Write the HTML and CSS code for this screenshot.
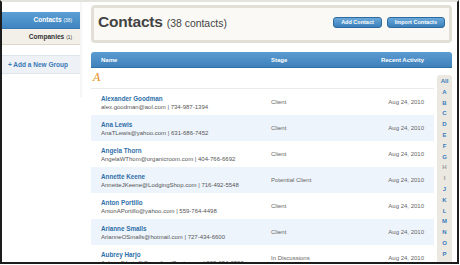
FILE: index.html
```html
<!DOCTYPE html>
<html>
<head>
<meta charset="utf-8">
<link rel="stylesheet" href="styles.css">
</head>
<body>
<div class="frame">
  <aside class="sidebar">
    <div class="nav-item active">Contacts <small>(38)</small></div>
    <div class="nav-item">Companies <small>(1)</small></div>
    <div class="add-group">+ Add a New Group</div>
  </aside>
  <main class="main">
    <div class="head-box">
      <h1 class="title">Contacts <span class="count">(38 contacts)</span></h1>
      <div class="actions">
        <button class="btn">Add Contact</button>
        <button class="btn">Import Contacts</button>
      </div>
    </div>
    <div class="thead">
      <span>Name</span><span>Stage</span><span class="right">Recent Activity</span>
    </div>
    <div class="body">
      <div class="list">
        <div class="letter">A</div>
        <div class="row">
          <div><div class="name">Alexander Goodman</div><div class="meta">alex.goodman@aol.com | 734-987-1394</div></div>
          <div class="stage">Client</div><div class="date">Aug 24, 2010</div>
        </div>
        <div class="row alt">
          <div><div class="name">Ana Lewis</div><div class="meta">AnaTLewis@yahoo.com | 631-686-7452</div></div>
          <div class="stage">Client</div><div class="date">Aug 24, 2010</div>
        </div>
        <div class="row">
          <div><div class="name">Angela Thorn</div><div class="meta">AngelaWThom@organicroom.com | 404-766-6692</div></div>
          <div class="stage">Client</div><div class="date">Aug 24, 2010</div>
        </div>
        <div class="row alt">
          <div><div class="name">Annette Keene</div><div class="meta">AnnetteJKeene@LodgingShop.com | 716-492-5548</div></div>
          <div class="stage">Potential Client</div><div class="date">Aug 24, 2010</div>
        </div>
        <div class="row">
          <div><div class="name">Anton Portillo</div><div class="meta">AntonAPortillo@yahoo.com | 559-764-4498</div></div>
          <div class="stage">Client</div><div class="date">Aug 24, 2010</div>
        </div>
        <div class="row alt">
          <div><div class="name">Arianne Smalls</div><div class="meta">AriannеOSmalls@hotmail.com | 727-434-6600</div></div>
          <div class="stage">Client</div><div class="date">Aug 24, 2010</div>
        </div>
        <div class="row">
          <div><div class="name">Aubrey Harjo</div><div class="meta">AubreyJHarjo@ConsultantQuote.com | 208-654-0300</div></div>
          <div class="stage">In Discussions</div><div class="date">Aug 24, 2010</div>
        </div>
      </div>
      <nav class="alpha">
        <a>All</a><a>A</a><a>B</a><a>C</a><a>D</a><a>E</a><a>F</a><a>G</a><a class="off">H</a><a class="off">I</a><a>J</a><a>K</a><a>L</a><a>M</a><a>N</a><a>O</a><a>P</a>
      </nav>
    </div>
  </main>
</div>
</body>
</html>
```
FILE: styles.css
```css
html, body {
  margin: 0;
  padding: 0;
  background: #ffffff;
  width: 460px;
  height: 265px;
  overflow: hidden;
  font-family: "Liberation Sans", Arial, sans-serif;
}
.frame {
  width: 455px;
  height: 260px;
  border-top: 2px solid #e4e2dc;
  border-left: 2px solid #1c1c1c;
  border-right: 2px solid #1c1c1c;
  border-bottom: 2px solid #1c1c1c;
  display: flex;
  overflow: hidden;
  background: #fff;
}
.sidebar {
  width: 78px;
  flex: none;
  padding-top: 10px;
  position: relative;
}
.sidebar::after {
  content: "";
  position: absolute;
  right: -3px;
  top: 0;
  width: 3px;
  height: 95px;
  background: linear-gradient(to right, rgba(0,0,0,0.05), rgba(0,0,0,0));
}
.nav-item {
  height: 15px;
  line-height: 15px;
  text-align: right;
  padding-right: 8px;
  font-size: 6.6px;
  font-weight: bold;
  color: #333;
  background: #f3f0e9;
  border-bottom: 1px solid #dcd8ce;
}
.nav-item small {
  font-size: 4.8px;
  font-weight: normal;
}
.nav-item.active {
  height: 16px;
  line-height: 16px;
  background: linear-gradient(#5d9fd4, #3f85c0);
  color: #fff;
  border-bottom: 1px solid #3a78ad;
}
.add-group {
  margin-top: 10px;
  height: 17px;
  line-height: 17px;
  padding-left: 6px;
  background: #eef2f7;
  border-top: 1px solid #dfe5ec;
  border-bottom: 1px solid #dfe5ec;
  color: #3a78b5;
  font-size: 6.5px;
  font-weight: bold;
}
.main {
  flex: 1;
  min-width: 0;
  padding: 3px 5px 0 11px;
}
.head-box {
  height: 38px;
  box-sizing: border-box;
  border: 3px solid #e2dfd6;
  border-radius: 4px;
  background: #faf9f5;
  display: flex;
  align-items: center;
  justify-content: space-between;
  padding: 0 4px 4px 4px;
}
.title {
  margin: 0;
  font-size: 15.5px;
  font-weight: bold;
  color: #444;
  letter-spacing: -0.2px;
}
.count {
  font-size: 10.4px;
  font-weight: normal;
  letter-spacing: 0;
}
.actions {
  display: flex;
  gap: 5px;
}
.btn {
  height: 11px;
  padding: 0 7px;
  border: 1px solid #2f6a9e;
  border-radius: 3px;
  background: linear-gradient(#6aa9db, #3b7fb9);
  color: #fff;
  font-family: "Liberation Sans", Arial, sans-serif;
  font-size: 5.5px;
  font-weight: bold;
  line-height: 9px;
}
.thead {
  margin-top: 9px;
  height: 16px;
  border-radius: 3px 3px 0 0;
  background: linear-gradient(#5b9cd1, #3e81bb);
  border-bottom: 1px solid #326ea3;
  box-sizing: border-box;
  display: grid;
  grid-template-columns: 170px 1fr 100px;
  align-items: center;
  padding: 0 28px 0 10px;
  color: #fff;
  font-size: 6px;
  font-weight: bold;
}
.right { text-align: right; }
.body {
  display: flex;
  gap: 3px;
}
.list {
  width: 343px;
  flex: none;
}
.letter {
  height: 20px;
  border-bottom: 1px solid #eceae6;
  padding-left: 2px;
  font-family: "DejaVu Serif", "Liberation Serif", serif;
  font-style: italic;
  font-size: 11px;
  line-height: 20px;
  color: #e8922a;
}
.row {
  height: 26px;
  display: grid;
  grid-template-columns: 170px 1fr 80px;
  align-items: center;
  padding: 0 10px;
  font-size: 6px;
  color: #666;
}
.row.alt { background: #eef4fc; }
.name {
  color: #2f6fa8;
  font-weight: bold;
  font-size: 6.3px;
  margin-bottom: 2px;
}
.meta { color: #555; }
.date { text-align: right; }
.alpha {
  margin-top: 7px;
  width: 15px;
  flex: none;
  background: #ebe8e2;
  border-radius: 3px;
  padding-top: 1px;
  display: flex;
  flex-direction: column;
  align-items: center;
  height: 200px;
}
.alpha a {
  height: 10.8px;
  line-height: 10.8px;
  font-size: 6px;
  font-weight: bold;
  color: #3a7dbb;
}
.alpha a.off { color: #9a9a9a; }
```
